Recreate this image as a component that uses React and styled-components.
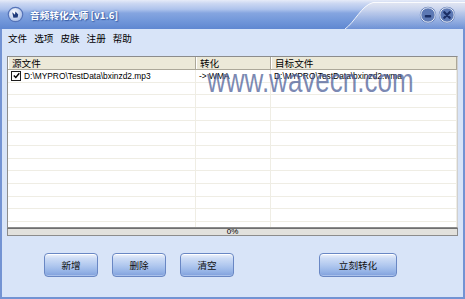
import React from "react";
import styled, { createGlobalStyle } from "styled-components";

const GlobalStyle = createGlobalStyle`
  html, body {
    margin: 0;
    padding: 0;
    background: #ffffff;
  }
  body {
    font-family: "Liberation Sans", "Noto Sans CJK SC", sans-serif;
  }
`;

const CJK = `"Noto Sans CJK SC", "Liberation Sans", sans-serif`;

const Window = styled.div`
  width: 465px;
  height: 299px;
  display: flex;
  flex-direction: column;
  overflow: hidden;
  background: #d8e4f8;
`;

const TitleBar = styled.div`
  position: relative;
  height: 29px;
  flex-shrink: 0;
  display: flex;
  align-items: center;
  padding-left: 7px;
  gap: 6px;
  background: linear-gradient(
    to bottom,
    #e6ebf8 0%,
    #cbd7f2 12%,
    #aec3ec 32%,
    #85a5e0 45%,
    #7398da 70%,
    #5f87d1 100%
  );
`;

const Swoosh = styled.svg`
  position: absolute;
  right: 0;
  top: 0;
`;

const TitleText = styled.span`
  position: relative;
  font-family: ${CJK};
  font-size: 9.6px;
  font-weight: bold;
  color: #ffffff;
  letter-spacing: 0.1px;
  text-shadow: 0 0 2px #3a5fa8, 1px 1px 1px #3a5fa8;
`;

const Controls = styled.div`
  position: relative;
  margin-left: auto;
  margin-right: 9px;
  display: flex;
  gap: 1px;
`;

const Body = styled.div`
  flex: 1;
  display: flex;
  flex-direction: column;
  border: 2px solid #7393d3;
  border-top: none;
  padding: 0 5px;
`;

const MenuBar = styled.div`
  height: 17px;
  display: flex;
  align-items: center;
  gap: 7px;
  padding-left: 1px;
`;

const MenuItem = styled.span`
  font-family: ${CJK};
  font-size: 9.6px;
  color: #000000;
`;

const Table = styled.div`
  position: relative;
  margin-top: 10px;
  height: 172px;
  box-sizing: border-box;
  border: 1px solid #8c8c8c;
  border-right-color: #cfcfcf;
  background: #ffffff;
  overflow: hidden;
`;

const Row = styled.div`
  display: grid;
  grid-template-columns: 188px 75px 1fr;
  height: ${(p) => (p.$head ? "13px" : "12.67px")};
  box-sizing: border-box;
  border-bottom: 1px solid ${(p) => (p.$head ? "#aca899" : "#efede4")};
  background: ${(p) => (p.$head ? "#ece9d8" : "#ffffff")};
`;

const Cell = styled.div`
  display: flex;
  align-items: center;
  gap: 3px;
  padding-left: ${(p) => (p.$head ? "4px" : "3px")};
  border-right: 1px solid ${(p) => (p.$head ? "#aca899" : "#efede4")};
  box-shadow: ${(p) => (p.$head ? "inset 1px 0 #ffffff" : "none")};
  font-family: ${(p) => (p.$head ? CJK : `"Liberation Sans", sans-serif`)};
  font-size: ${(p) => (p.$head ? "9.6px" : "8.4px")};
  color: #000000;
  white-space: nowrap;
  overflow: hidden;
`;

const Check = styled.span`
  width: 8px;
  height: 8px;
  border: 1px solid #1c1c1c;
  background: #ffffff;
  display: flex;
  align-items: center;
  justify-content: center;
  flex-shrink: 0;
`;

const Watermark = styled.div`
  position: absolute;
  left: 199px;
  top: 4px;
  font-family: "Liberation Sans", sans-serif;
  font-size: 26px;
  color: rgba(74, 92, 150, 0.72);
  transform: scaleY(1.3);
  transform-origin: top left;
  pointer-events: none;
  white-space: nowrap;
`;

const Progress = styled.div`
  height: 8px;
  box-sizing: border-box;
  border: 1px solid #8c8c8c;
  border-top-color: #6f6f6f;
  background: #e2e1dd;
  display: flex;
  align-items: center;
  justify-content: center;
  font-family: "Liberation Sans", sans-serif;
  font-size: 8px;
  line-height: 6px;
  color: #000000;
`;

const ButtonRow = styled.div`
  display: flex;
  gap: 14px;
  margin-top: 17px;
  padding-left: 37px;
`;

const Button = styled.button`
  width: ${(p) => (p.$wide ? "78px" : "54px")};
  height: 24px;
  margin-left: ${(p) => (p.$wide ? "71px" : "0")};
  padding: 0;
  border: 1px solid #6987c4;
  border-radius: 4px;
  background: linear-gradient(
    to bottom,
    #eef3fc 0%,
    #cddcf5 20%,
    #b2c9ef 50%,
    #95b3e6 80%,
    #7f9fdc 100%
  );
  box-shadow: inset 0 1px #ffffff, inset 0 -1px #a9c0ea;
  font-family: ${CJK};
  font-size: 9.6px;
  color: #111111;
  cursor: pointer;
`;

const AppIcon = () => (
  <svg width="17" height="17" viewBox="0 0 17 17" style={{ position: "relative" }}>
    <defs>
      <radialGradient id="ig" cx="0.4" cy="0.35" r="0.7">
        <stop offset="0" stopColor="#ffffff" />
        <stop offset="1" stopColor="#a9bde6" />
      </radialGradient>
    </defs>
    <circle cx="8.5" cy="8.5" r="7.8" fill="#5573b8" />
    <circle cx="8.5" cy="8.5" r="6.6" fill="url(#ig)" />
    <path d="M5.2 6.2 L8 8.8 L8.4 5.4 L11.2 8.6 L10.6 11.6 L6.4 11.8 Z" fill="#1f3a7a" />
  </svg>
);

const CtrlButton = ({ kind }) => (
  <svg width="18" height="18" viewBox="0 0 18 18">
    <defs>
      <linearGradient id={`cg-${kind}`} x1="0" y1="0" x2="0" y2="1">
        <stop offset="0" stopColor="#dfe7f7" />
        <stop offset="0.5" stopColor="#a9bde5" />
        <stop offset="1" stopColor="#7e9bd4" />
      </linearGradient>
    </defs>
    <circle cx="9" cy="9" r="8.2" fill="#5c78b4" />
    <circle cx="9" cy="9" r="7.2" fill="url(#cg-${kind})" stroke="#f4f7fd" strokeWidth="0.9" />
    {kind === "min" ? (
      <rect x="5.8" y="8.9" width="6.4" height="2.6" rx="0.8" fill="#1b2f66" />
    ) : (
      <path d="M6.3 6.3 L11.7 11.7 M11.7 6.3 L6.3 11.7" stroke="#1b2f66" strokeWidth="2.3" strokeLinecap="round" />
    )}
  </svg>
);

const CheckMark = () => (
  <svg width="7" height="7" viewBox="0 0 7 7">
    <path d="M0.8 3.4 L2.8 5.4 L6.3 1.2" fill="none" stroke="#000" strokeWidth="1.4" />
  </svg>
);

const emptyRows = Array.from({ length: 12 });

export default function App() {
  return (
    <>
      <GlobalStyle />
      <Window>
        <TitleBar>
          <Swoosh width="120" height="29" viewBox="0 0 120 29">
            <defs>
              <linearGradient id="sw" x1="0" y1="0" x2="0" y2="1">
                <stop offset="0" stopColor="#e2e6f2" stopOpacity="0.95" />
                <stop offset="0.45" stopColor="#c6d1ec" stopOpacity="0.7" />
                <stop offset="1" stopColor="#9fb4e2" stopOpacity="0.25" />
              </linearGradient>
            </defs>
            <path d="M0 29 C10 22 16 6 28 2.5 L120 2.5 L120 29 Z" fill="url(#sw)" />
            <path d="M0 29 C10 22 16 6 28 2.5 L120 2.5" fill="none" stroke="#ffffff" strokeOpacity="0.85" strokeWidth="1" />
          </Swoosh>
          <AppIcon />
          <TitleText>音频转化大师 [v1.6]</TitleText>
          <Controls>
            <CtrlButton kind="min" />
            <CtrlButton kind="close" />
          </Controls>
        </TitleBar>
        <Body>
          <MenuBar>
            <MenuItem>文件</MenuItem>
            <MenuItem>选项</MenuItem>
            <MenuItem>皮肤</MenuItem>
            <MenuItem>注册</MenuItem>
            <MenuItem>帮助</MenuItem>
          </MenuBar>
          <Table>
            <Row $head>
              <Cell $head>源文件</Cell>
              <Cell $head>转化</Cell>
              <Cell $head>目标文件</Cell>
            </Row>
            <Row>
              <Cell>
                <Check>
                  <CheckMark />
                </Check>
                D:\MYPRO\TestData\bxinzd2.mp3
              </Cell>
              <Cell>-&gt; WMA</Cell>
              <Cell>D:\MYPRO\TestData\bxinzd2.wma</Cell>
            </Row>
            {emptyRows.map((_, i) => (
              <Row key={i}>
                <Cell />
                <Cell />
                <Cell />
              </Row>
            ))}
            <Watermark>www.wavecn.com</Watermark>
          </Table>
          <Progress>0%</Progress>
          <ButtonRow>
            <Button>新增</Button>
            <Button>删除</Button>
            <Button>清空</Button>
            <Button $wide>立刻转化</Button>
          </ButtonRow>
        </Body>
      </Window>
    </>
  );
}
